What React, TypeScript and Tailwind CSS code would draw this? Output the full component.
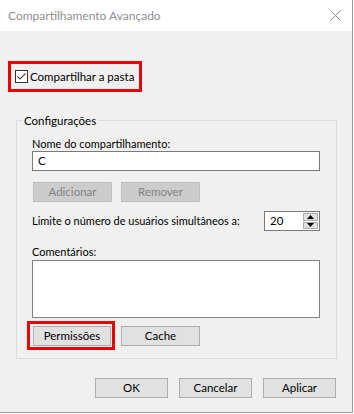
import type { ReactNode } from 'react';

const fonte = { fontFamily: 'Lato, "Liberation Sans", sans-serif' };

function Botao({ children, desativado = false, largura = 'w-[79px]' }: { children: ReactNode; desativado?: boolean; largura?: string }) {
  return (
    <button
      type="button"
      className={`${largura} h-[20px] border text-[11.5px] leading-none ${
        desativado ? 'border-[#bfbfbf] bg-[#cccccc] text-[#838383]' : 'border-[#adadad] bg-[#e1e1e1] text-black'
      }`}
    >
      {children}
    </button>
  );
}

function Marcada() {
  return (
    <span className="flex h-[13px] w-[13px] items-center justify-center border border-[#333333] bg-white">
      <svg width="11" height="11" viewBox="0 0 11 11">
        <path d="M1.5 5.5 L4 8 L9.5 2.5" fill="none" stroke="#4d4d4d" strokeWidth="1.2" />
      </svg>
    </span>
  );
}

function Fechar() {
  return (
    <svg width="11" height="11" viewBox="0 0 11 11">
      <path d="M0.5 0.5 L10.5 10.5 M10.5 0.5 L0.5 10.5" stroke="#8a8a8a" strokeWidth="1" />
    </svg>
  );
}

function Spinner() {
  return (
    <div className="flex h-[20px] w-[56px] border border-[#7a7a7a] bg-white">
      <span className="flex-1 pl-[5px] text-[11.5px] leading-[18px]">20</span>
      <div className="my-px mr-px flex w-[15px] flex-col gap-px">
        <span className="flex flex-1 items-center justify-center border border-[#adadad] bg-[#e1e1e1]">
          <svg width="7" height="4" viewBox="0 0 7 4">
            <path d="M3.5 0 L7 4 L0 4 Z" fill="#000" />
          </svg>
        </span>
        <span className="flex flex-1 items-center justify-center border border-[#adadad] bg-[#e1e1e1]">
          <svg width="7" height="4" viewBox="0 0 7 4">
            <path d="M0 0 L7 0 L3.5 4 Z" fill="#000" />
          </svg>
        </span>
      </div>
    </div>
  );
}

export default function App() {
  return (
    <div className="h-[414px] w-[354px] bg-white" style={fonte}>
      <div className="flex h-[413px] w-[353px] flex-col border-b border-r border-[#9a9a9a] bg-[#f0f0f0] text-[11px] text-black">
        <div className="flex h-[31px] items-center justify-between bg-white pl-[8px] pr-[11px]">
          <span className="text-[12px] text-[#8f8f8f]">Compartilhamento Avançado</span>
          <Fechar />
        </div>

        <div className="ml-[8px] mt-[30px] flex h-[31px] w-[134px] items-center gap-[2px] whitespace-nowrap border-[3px] border-[#ee0000] pl-[4px] text-[11.5px]">
          <Marcada />
          <span>Compartilhar a pasta</span>
        </div>

        <fieldset className="ml-[16px] mt-[21px] w-[321px] border border-[#dcdcdc] px-[15px] pb-[12px]">
          <legend className="-ml-[10px] px-[2px] text-[11.5px] leading-[15px]">Configurações</legend>
          <div className="mt-[8px] leading-[15px]">Nome do compartilhamento:</div>
          <div className="flex h-[20px] w-[288px] items-center border border-[#7a7a7a] bg-white pl-[5px] text-[11.5px]">C</div>
          <div className="mt-[11px] flex gap-[9px] pl-px">
            <Botao desativado>Adicionar</Botao>
            <Botao desativado>Remover</Botao>
          </div>
          <div className="mt-[9px] flex w-[288px] items-center justify-between">
            <span>Limite o número de usuários simultâneos a:</span>
            <Spinner />
          </div>
          <div className="mt-[13px] leading-[15px]">Comentários:</div>
          <div className="mt-px h-[58px] w-[288px] border border-[#828282] bg-white" />
          <div className="mt-[8px] flex gap-[10px] pl-px">
            <div className="relative">
              <Botao largura="w-[78px]">Permissões</Botao>
              <span className="pointer-events-none absolute -bottom-[4px] -left-[6px] -right-[4px] -top-[5px] border-[3px] border-[#ee0000]" />
            </div>
            <Botao>Cache</Botao>
          </div>
        </fieldset>

        <div className="mt-[19px] flex justify-end gap-[11px] pr-[16px]">
          <Botao largura="w-[73px]">OK</Botao>
          <Botao largura="w-[73px]">Cancelar</Botao>
          <Botao largura="w-[73px]">Aplicar</Botao>
        </div>
      </div>
    </div>
  );
}
